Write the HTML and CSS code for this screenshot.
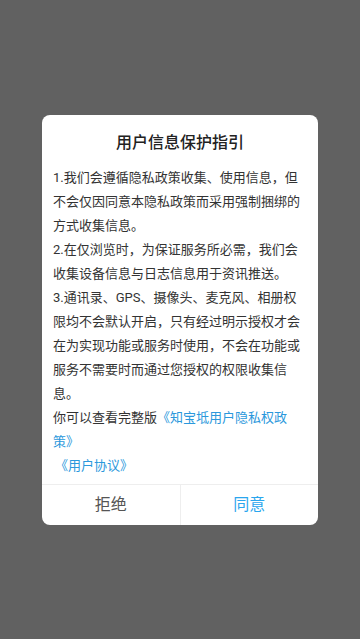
FILE: index.html
```html
<!DOCTYPE html>
<html lang="zh-CN">

<head>
    <meta charset="UTF-8">
    <meta name="viewport" content="width=device-width, initial-scale=1.0">
    <title>用户信息保护指引</title>

    <link rel="stylesheet" href="styles.css">
</head>

<body>
    <div class="mask">
        <div class="dialog">
            <h1 class="dialog-title">用户信息保护指引</h1>
            <div class="dialog-body">
                <p>1.我们会遵循隐私政策收集、使用信息，但不会仅因同意本隐私政策而采用强制捆绑的方式收集信息。</p>
                <p>2.在仅浏览时，为保证服务所必需，我们会收集设备信息与日志信息用于资讯推送。</p>
                <p>3.通讯录、GPS、摄像头、麦克风、相册权限均不会默认开启，只有经过明示授权才会在为实现功能或服务时使用，不会在功能或服务不需要时而通过您授权的权限收集信息。</p>
                <p>你可以查看完整版<a class="link" href="#">《知宝坻用户隐私权政<br>策》</a></p>
                <p class="agreement"><a class="link" href="#">《用户协议》</a></p>
            </div>
            <div class="dialog-btns">
                <div class="btn btn-reject">拒绝</div>
                <div class="btn btn-agree">同意</div>
            </div>
        </div>
    </div>
</body>

</html>
```

FILE: styles.css
```css
* {
    box-sizing: border-box;
}

body {
    margin: 0;
    font-family: Roboto, "Noto Sans CJK SC", sans-serif;
}

.mask {
    width: 100%;
    height: 100vh;
    background-color: #616161;

    display: flex;
    justify-content: center;
    align-items: center;
}

.dialog {
    width: 276px;
    background-color: #fff;
    border-radius: 8px;
    overflow: hidden;
}

.dialog-title {
    margin: 0;
    padding: 16px 0 11px;
    text-align: center;
    font-size: 16px;
    line-height: 24px;
    font-weight: 500;
    color: #222;
}

.dialog-body {
    padding: 0 11px 6px;
    font-size: 13px;
    line-height: 24px;
    color: #333;
}

.dialog-body p {
    margin: 0;
}

.link {
    color: #2b98dc;
    text-decoration: none;
}

.agreement {
    padding-left: 2px;
}

.dialog-btns {
    display: flex;
    border-top: 1px solid #eee;
}

.btn {
    flex: 1;
    height: 40px;
    line-height: 40px;
    text-align: center;
    font-size: 16px;
    cursor: pointer;
}

.btn-reject {
    color: #555;
    border-right: 1px solid #eee;
}

.btn-agree {
    color: #2aa6ee;
}
```
